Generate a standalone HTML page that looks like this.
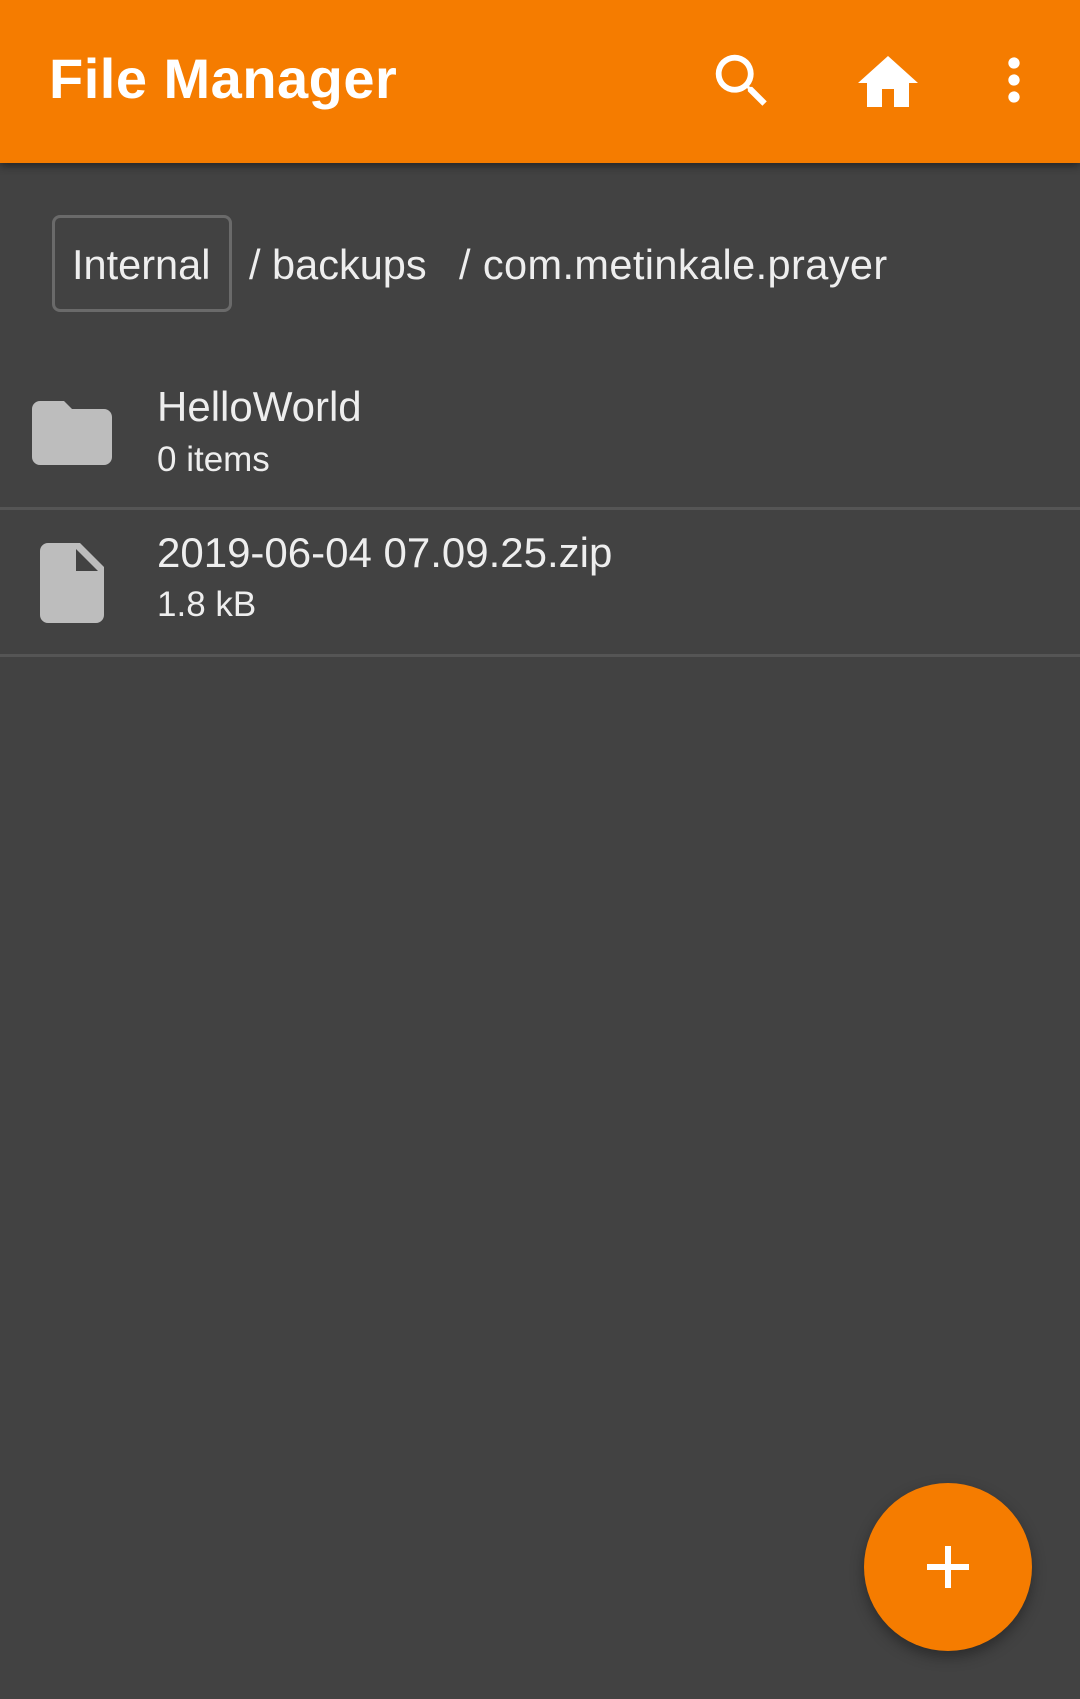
<!DOCTYPE html>
<html><head><meta charset="utf-8"><style>
*{margin:0;padding:0;box-sizing:border-box}
body{width:1080px;height:1699px;background:#424242;font-family:"Liberation Sans",sans-serif;position:relative;overflow:hidden;color:#eeeeee}
.hdr{position:absolute;left:0;top:0;width:1080px;height:163px;background:#f57c00;box-shadow:0 3px 8px rgba(0,0,0,.45)}
.t{position:absolute;white-space:nowrap}
.box{position:absolute;left:52px;top:215px;width:180px;height:97px;border:3px solid #6a6a6a;border-radius:8px}
.div{position:absolute;left:0;width:1080px;height:3px;background:#555}
.fab{position:absolute;left:864px;top:1483px;width:168px;height:168px;border-radius:50%;background:#f57c00;box-shadow:0 6px 14px rgba(0,0,0,.35)}
</style></head><body>
<div class="hdr">
 <div class="t" style="left:49px;top:47px;font-size:56px;font-weight:bold;color:#fff;line-height:64px;letter-spacing:0.5px">File Manager</div>
 <svg style="position:absolute;left:707px;top:46px" width="70" height="70" viewBox="0 0 24 24"><path fill="#fff" d="M15.5 14h-.79l-.28-.27A6.47 6.47 0 0 0 16 9.5 6.5 6.5 0 1 0 9.5 16c1.61 0 3.09-.59 4.23-1.57l.27.28v.79l5 4.99L20.49 19l-4.99-5zm-6 0C7.01 14 5 11.99 5 9.5S7.01 5 9.5 5 14 7.01 14 9.5 11.99 14 9.5 14z"/></svg>
 <svg style="position:absolute;left:852px;top:47px" width="72" height="72" viewBox="0 0 24 24"><path fill="#fff" d="M10 20v-6h4v6h5v-8h3L12 3 2 12h3v8z"/></svg>
 <svg style="position:absolute;left:980px;top:46px" width="68" height="68" viewBox="0 0 24 24"><path fill="#fff" d="M12 8c1.1 0 2-.9 2-2s-.9-2-2-2-2 .9-2 2 .9 2 2 2zm0 2c-1.1 0-2 .9-2 2s.9 2 2 2 2-.9 2-2-.9-2-2-2zm0 6c-1.1 0-2 .9-2 2s.9 2 2 2 2-.9 2-2-.9-2-2-2z"/></svg>
</div>
<div class="box"></div>
<div class="t" style="left:72px;top:240px;font-size:41.5px;line-height:50px">Internal</div>
<div class="t" style="left:249px;top:240px;font-size:41.5px;line-height:50px">/ backups</div>
<div class="t" style="left:459px;top:240px;font-size:41.5px;line-height:50px;letter-spacing:0.4px">/ com.metinkale.prayer</div>

<svg style="position:absolute;left:24px;top:385px" width="96" height="96" viewBox="0 0 24 24"><path fill="#bdbdbd" d="M10 4H4c-1.1 0-2 .9-2 2v12c0 1.1.9 2 2 2h16c1.1 0 2-.9 2-2V8c0-1.1-.9-2-2-2h-8l-2-2z"/></svg>
<div class="t" style="left:157px;top:382px;font-size:42px;line-height:50px">HelloWorld</div>
<div class="t" style="left:157px;top:438px;font-size:35px;line-height:44px">0 items</div>
<div class="div" style="top:507px"></div>

<svg style="position:absolute;left:24px;top:535px" width="96" height="96" viewBox="0 0 24 24"><path fill="#bdbdbd" d="M6 2c-1.1 0-2 .9-2 2v16c0 1.1.9 2 2 2h12c1.1 0 2-.9 2-2V8l-6-6H6zm7 7V3.5L18.5 9H13z"/></svg>
<div class="t" style="left:157px;top:528px;font-size:42px;line-height:50px">2019-06-04 07.09.25.zip</div>
<div class="t" style="left:157px;top:583px;font-size:35px;line-height:44px">1.8 kB</div>
<div class="div" style="top:654px"></div>

<div class="fab">
 <div style="position:absolute;left:63px;top:81px;width:42px;height:6px;background:#fff"></div>
 <div style="position:absolute;left:81px;top:63px;width:6px;height:42px;background:#fff"></div>
</div>
</body></html>
